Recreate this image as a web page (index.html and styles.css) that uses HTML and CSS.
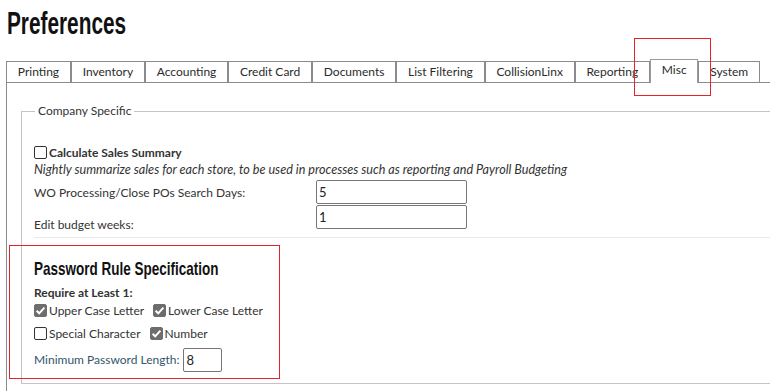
FILE: index.html
```html
<html>

<head>
    <title>Preferences</title>
    <link rel="stylesheet" href="styles.css">
</head>

<body>
    <h1 class="title"><span>Preferences</span></h1>

    <div class="tabs">
        <div class="tab">Printing</div>
        <div class="tab">Inventory</div>
        <div class="tab">Accounting</div>
        <div class="tab">Credit Card</div>
        <div class="tab">Documents</div>
        <div class="tab">List Filtering</div>
        <div class="tab">CollisionLinx</div>
        <div class="tab">Reporting</div>
        <div class="tab active">Misc</div>
        <div class="tab">System</div>
    </div>

    <div class="panel">
        <fieldset class="group">
            <legend>Company Specific</legend>

            <div class="check strong">
                <span class="box"></span>Calculate Sales Summary
            </div>
            <div class="hint">Nightly summarize sales for each store, to be used in processes such as reporting and Payroll Budgeting</div>

            <div class="fields">
                <div class="label mid">WO Processing/Close POs Search Days:</div>
                <input class="field" type="text" value="5">
                <div class="label low">Edit budget weeks:</div>
                <input class="field" type="text" value="1">
            </div>

            <div class="password">
                <h2 class="subtitle"><span>Password Rule Specification</span></h2>
                <div class="require">Require at Least 1:</div>
                <div class="check-row">
                    <div class="check"><span class="box on"><svg viewBox="0 0 13 13"><path d="M2.6 6.8 L5.2 9.3 L10.4 3.6" /></svg></span>Upper Case Letter</div>
                    <div class="check"><span class="box on"><svg viewBox="0 0 13 13"><path d="M2.6 6.8 L5.2 9.3 L10.4 3.6" /></svg></span>Lower Case Letter</div>
                </div>
                <div class="check-row">
                    <div class="check"><span class="box"></span>Special Character</div>
                    <div class="check"><span class="box on"><svg viewBox="0 0 13 13"><path d="M2.6 6.8 L5.2 9.3 L10.4 3.6" /></svg></span>Number</div>
                </div>
                <div class="min-row">
                    <div class="label blue">Minimum Password Length:</div>
                    <input class="field small" type="text" value="8">
                </div>
            </div>
        </fieldset>
    </div>

    <div class="mark mark_tab"></div>
    <div class="mark mark_pass"></div>
</body>

</html>
```

FILE: styles.css
```css
body {
    margin: 0;
    width: 770px;
    height: 391px;
    overflow: hidden;
    background-color: #ffffff;
    color: #333333;
    font-family: Lato, "Open Sans", sans-serif;
    font-size: 12px;
    position: relative;
}

.title {
    margin: 0;
    height: 56px;
    padding: 3px 0 0 7px;
    font-family: "Liberation Sans", sans-serif;
    font-weight: bold;
    font-size: 32px;
    line-height: 40px;
    color: #111111;
}

.title span,
.subtitle span {
    display: inline-block;
    transform-origin: left center;
}

.title span {
    transform: scaleX(0.65);
}

.tabs {
    display: flex;
    align-items: flex-end;
    height: 23px;
    margin-left: 6px;
    border-bottom: 1px solid #8a8a90;
}

.tab {
    height: 20px;
    line-height: 20px;
    padding: 0 10.8px;
    border: 1px solid #8a8a90;
    border-bottom: none;
    color: #2b2b2b;
}

.tab.active {
    position: relative;
    height: 23px;
    line-height: 20px;
    margin-bottom: -1px;
    background-color: #ffffff;
    border-color: #9a9aa0;
}

.panel {
    margin-left: 6px;
    padding: 20px 0 40px 14px;
    border-left: 1px solid #8a8a90;
}

.group {
    width: 900px;
    margin: 0;
    padding: 24px 0 11px 12px;
    border: 1px solid #c4c4c4;
}

.group legend {
    margin-left: 1px;
    padding: 0 3px;
    line-height: 16px;
    color: #333333;
}

.check {
    display: flex;
    align-items: center;
    height: 17px;
}

.strong {
    font-weight: 700;
    height: 18px;
}

.box {
    width: 11px;
    height: 11px;
    margin-right: 2px;
    border: 1px solid #333333;
    border-radius: 2px;
    background-color: #ffffff;
    display: flex;
}

.box.on {
    background-color: #6d6d6d;
    border-color: #6d6d6d;
}

.box svg {
    width: 13px;
    height: 13px;
    margin: -1px;
    fill: none;
    stroke: #ffffff;
    stroke-width: 2;
}

.hint {
    font-style: italic;
    font-size: 12.6px;
    line-height: 18px;
}

.fields {
    display: grid;
    grid-template-columns: 282px 151px;
    grid-template-rows: 24px 24px;
    row-gap: 1px;
    margin-top: 1px;
}

.label {
    line-height: 16px;
}

.label.mid {
    align-self: center;
    padding-top: 1px;
}

.label.low {
    align-self: start;
    padding-top: 12px;
}

.label.blue {
    color: #34546a;
}

.field {
    box-sizing: border-box;
    height: 24px;
    width: 151px;
    margin: 0;
    padding: 0 2px;
    border: 1px solid #767676;
    border-radius: 2px;
    font-family: Lato, "Open Sans", sans-serif;
    font-size: 13px;
    color: #222222;
}

.field.small {
    width: 39px;
}

.password {
    margin-top: 8px;
    border-top: 1px solid #e8e8e8;
}

.subtitle {
    margin: 19px 0 0 0;
    height: 24px;
    font-family: "Liberation Sans", sans-serif;
    font-weight: bold;
    font-size: 19px;
    line-height: 24px;
    color: #111111;
}

.subtitle span {
    transform: scaleX(0.71);
}

.require {
    margin-top: 4px;
    line-height: 16px;
    font-weight: 700;
}

.check-row {
    display: flex;
    gap: 9px;
    margin-top: 1px;
}

.check-row + .check-row {
    margin-top: 6px;
}

.min-row {
    display: flex;
    align-items: center;
    gap: 4px;
    margin-top: 6px;
}

.mark {
    position: absolute;
    box-sizing: border-box;
    border: 1px solid #e3242b;
}

.mark_tab {
    left: 634px;
    top: 38px;
    width: 77px;
    height: 58px;
}

.mark_pass {
    left: 9px;
    top: 245px;
    width: 271px;
    height: 134px;
}
```
